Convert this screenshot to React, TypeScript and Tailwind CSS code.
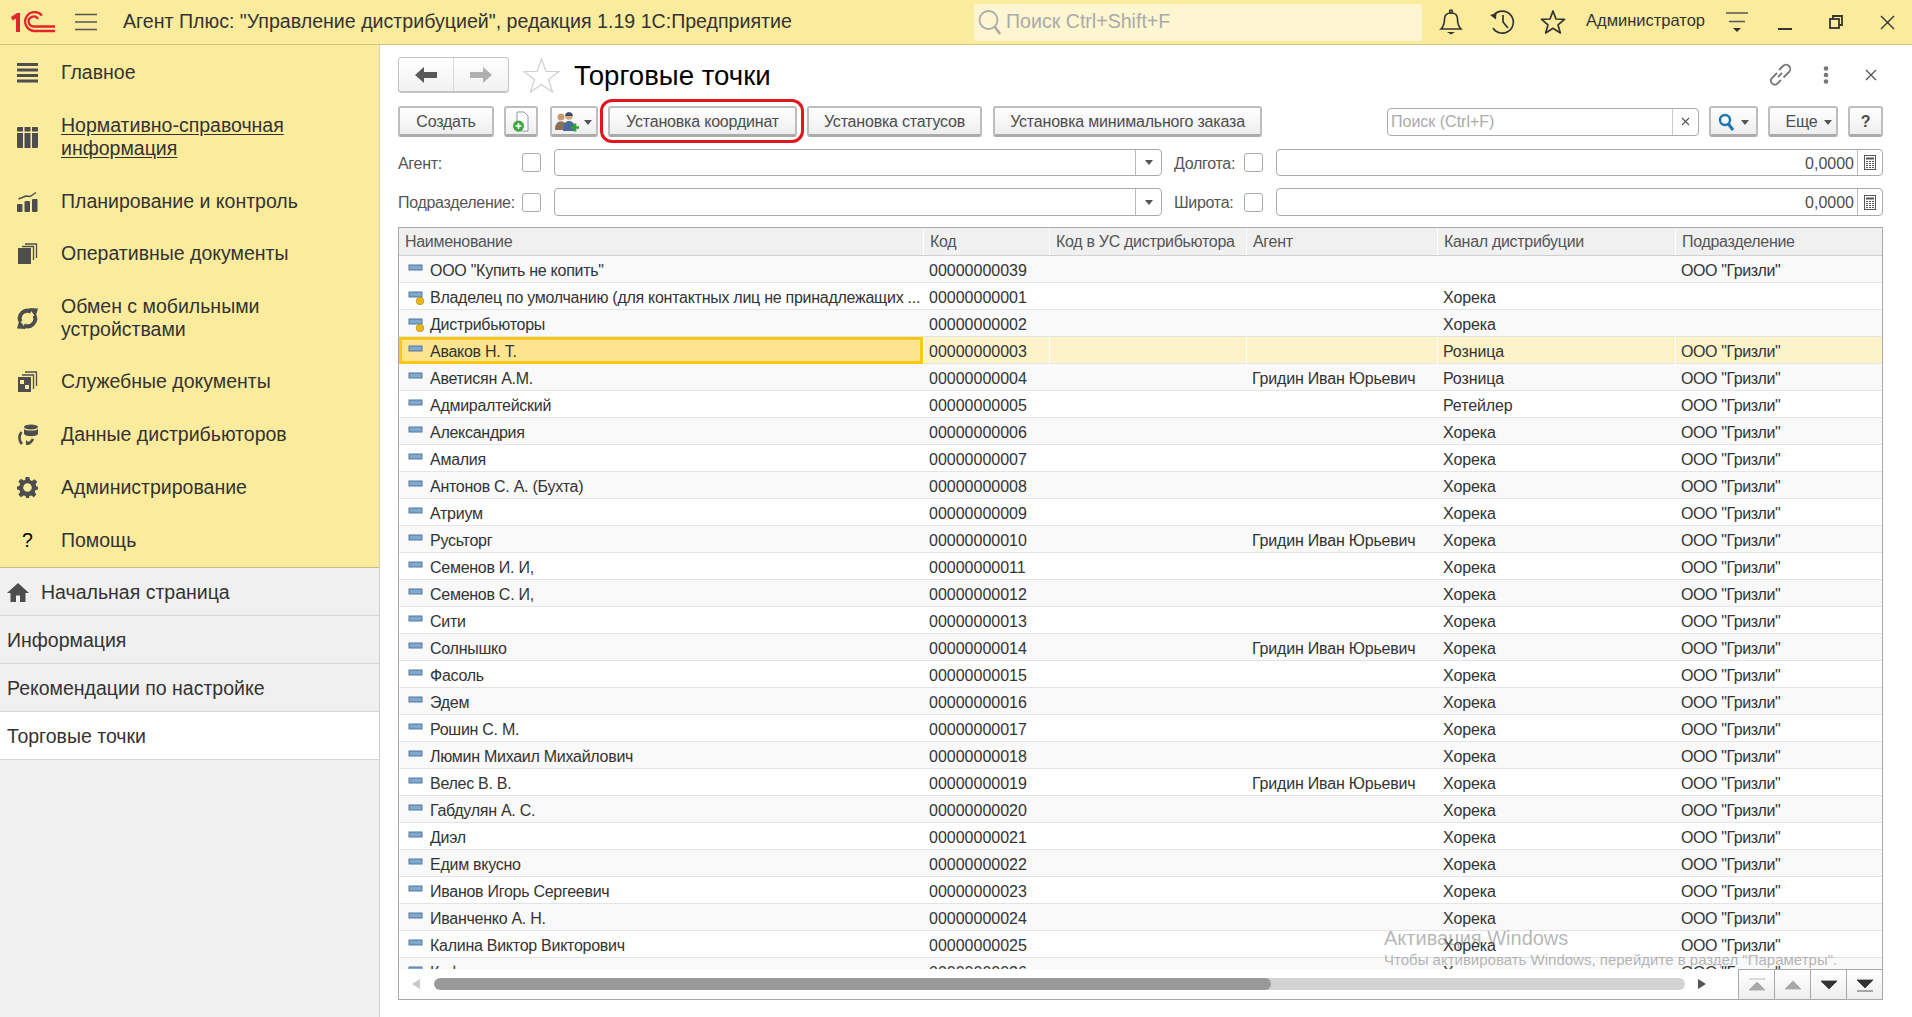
import React from "react";

const FONT = "font-['Liberation_Sans',Arial,sans-serif]";

type Row = [string, string, string, string, string, number?];
const G = 'ООО "Гризли"';
const A = "Гридин Иван Юрьевич";
const H = "Хорека";
const rows: Row[] = [
  ['ООО "Купить не копить"', "00000000039", "", "", G, 0],
  ["Владелец по умолчанию (для контактных лиц не принадлежащих ...", "00000000001", "", H, "", 1],
  ["Дистрибьюторы", "00000000002", "", H, "", 1],
  ["Аваков Н. Т.", "00000000003", "", "Розница", G],
  ["Аветисян А.М.", "00000000004", A, "Розница", G],
  ["Адмиралтейский", "00000000005", "", "Ретейлер", G],
  ["Александрия", "00000000006", "", H, G],
  ["Амалия", "00000000007", "", H, G],
  ["Антонов С. А. (Бухта)", "00000000008", "", H, G],
  ["Атриум", "00000000009", "", H, G],
  ["Русьторг", "00000000010", A, H, G],
  ["Семенов И. И,", "00000000011", "", H, G],
  ["Семенов С. И,", "00000000012", "", H, G],
  ["Сити", "00000000013", "", H, G],
  ["Солнышко", "00000000014", A, H, G],
  ["Фасоль", "00000000015", "", H, G],
  ["Эдем", "00000000016", "", H, G],
  ["Рошин С. М.", "00000000017", "", H, G],
  ["Люмин Михаил Михайлович", "00000000018", "", H, G],
  ["Велес В. В.", "00000000019", A, H, G],
  ["Габдулян А. С.", "00000000020", "", H, G],
  ["Диэл", "00000000021", "", H, G],
  ["Едим вкусно", "00000000022", "", H, G],
  ["Иванов Игорь Сергеевич", "00000000023", "", H, G],
  ["Иванченко А. Н.", "00000000024", "", H, G],
  ["Калина Виктор Викторович", "00000000025", "", H, G],
  ["Кафе", "00000000026", "", H, G],
];

const C = "#4d4d4d";

function NavIcon({ k }: { k: string }) {
  const common = { width: 21, height: 21, viewBox: "0 0 21 21", fill: C, className: "shrink-0" };
  switch (k) {
    case "main":
      return (
        <svg {...common}>
          <rect x="0" y="1" width="21" height="3" />
          <rect x="0" y="6.5" width="21" height="3" />
          <rect x="0" y="12" width="21" height="3" />
          <rect x="0" y="17.5" width="21" height="3" />
        </svg>
      );
    case "ref":
      return (
        <svg {...common}>
          <rect x="0" y="0" width="21" height="21" rx="1" />
          <rect x="0" y="4.5" width="21" height="1.5" fill="#fbec9d" />
          <rect x="6" y="0" width="1.5" height="21" fill="#fbec9d" />
          <rect x="13.5" y="0" width="1.5" height="21" fill="#fbec9d" />
        </svg>
      );
    case "plan":
      return (
        <svg {...common}>
          <rect x="0" y="13" width="5.5" height="8" rx="1" />
          <rect x="7.5" y="10" width="5.5" height="11" rx="1" />
          <rect x="15" y="8" width="5.5" height="13" rx="1" />
          <path d="M1.5 8 L9 5 L13 5.5 L19 1.5" fill="none" stroke={C} strokeWidth="1.5" />
        </svg>
      );
    case "oper":
      return (
        <svg {...common}>
          <rect x="1" y="5" width="13" height="16" />
          <path d="M5 3.5 H16.5 V17" fill="none" stroke={C} strokeWidth="1.3" />
          <path d="M8 1 H19.5 V15" fill="none" stroke={C} strokeWidth="1.3" />
        </svg>
      );
    case "sync":
      return (
        <svg {...common}>
          <path d="M3.5 13.5 A7.5 7.5 0 0 1 14 3.8" fill="none" stroke={C} strokeWidth="4" />
          <path d="M17.5 7.5 A7.5 7.5 0 0 1 7 17.2" fill="none" stroke={C} strokeWidth="4" />
          <path d="M12 0 L21 0.5 L18.5 9 Z" />
          <path d="M9 21 L0 20.5 L2.5 12 Z" />
        </svg>
      );
    case "serv":
      return (
        <svg {...common}>
          <rect x="1" y="6" width="13" height="15" />
          <rect x="3" y="9" width="4" height="4" fill="#fbec9d" />
          <rect x="8" y="14" width="4" height="4" fill="#fbec9d" />
          <path d="M5 4 H16.5 V18" fill="none" stroke={C} strokeWidth="1.3" />
          <path d="M8 1 H19.5 V15" fill="none" stroke={C} strokeWidth="1.3" />
        </svg>
      );
    case "dist":
      return (
        <svg {...common}>
          <ellipse cx="14" cy="3" rx="7" ry="2.6" />
          <path d="M7 5 C9 7 19 7 21 5 V10 C19 13 9 13 7 10 Z" />
          <path d="M4.5 8 A9 9 0 0 0 5 20" fill="none" stroke={C} strokeWidth="2.6" />
          <path d="M10 20 A9 9 0 0 0 16 15" fill="none" stroke={C} strokeWidth="2.6" />
          <path d="M9 16 L14 20 L9 21 Z" />
        </svg>
      );
    case "admin":
      return (
        <svg {...common}>
          <path
            fillRule="evenodd"
            d="M8.6 0 H12.4 L13 3 L15 3.9 L17.6 2.2 L20.2 4.8 L18.5 7.4 L19.4 9.4 L21 9.6 V12.4 L18.6 13 L17.7 15 L19.4 17.6 L16.8 20.2 L14.2 18.5 L12.4 19 L12 21 H9 L8.6 19 L6.6 18.5 L4 20.2 L1.4 17.6 L3.1 15 L2.3 13 L0 12.4 V9.6 L2.3 9 L3.1 7 L1.4 4.4 L4 1.8 L6.6 3.5 L8.2 3 Z M10.5 6.2 A4.3 4.3 0 1 0 10.5 14.8 A4.3 4.3 0 1 0 10.5 6.2 Z"
          />
        </svg>
      );
    default:
      return <span className="w-[21px] shrink-0 text-center text-black">?</span>;
  }
}

const nav: [string, string, string, boolean?][] = [
  ["main", "Главное", "py-[15px]"],
  ["ref", "Нормативно-справочная информация", "py-[15px]", true],
  ["plan", "Планирование и контроль", "pt-[15px] pb-[14px]"],
  ["oper", "Оперативные документы", "py-[15px]"],
  ["sync", "Обмен с мобильными устройствами", "pt-[15px] pb-[14px]"],
  ["serv", "Служебные документы", "py-[15px]"],
  ["dist", "Данные дистрибьюторов", "py-[15px]"],
  ["admin", "Администрирование", "py-[15px]"],
  ["help", "Помощь", "py-[15px]"],
];

function TopBar() {
  return (
    <header className="flex h-[45px] shrink-0 items-center border-b border-[#d3c47c] bg-[#fbec9d] text-[#333]">
      <svg width="44" height="22" viewBox="0 0 44 22" className="ml-[11px] shrink-0" fill="none" stroke="#e0262c" strokeWidth="2.3">
        <path d="M0 6 L6 2 H9 V21 H5 V7.5 L1.5 9.5" fill="#e0262c" stroke="none" />
        <path d="M44 20 H23 A9.5 9.5 0 1 1 31 4.5" />
        <path d="M44 15.5 H23 A5 5 0 1 1 27 8" />
      </svg>
      <svg width="22" height="18" viewBox="0 0 22 18" className="ml-[20px] shrink-0" stroke="#555" strokeWidth="1.6">
        <path d="M0 1.5 H22 M0 9 H22 M0 16.5 H22" />
      </svg>
      <div className="ml-[26px] w-[809px] shrink-0 whitespace-nowrap text-[19.6px]">Агент Плюс: "Управление дистрибуцией", редакция 1.19 1С:Предприятие</div>
      <div className="ml-[42px] flex h-[37px] w-[448px] shrink-0 items-center rounded-[2px] bg-[#fdf6d0] pl-[3px] text-[19.6px] text-[#aaa]">
        <svg width="26" height="28" viewBox="0 0 26 28" fill="none" stroke="#aaa" strokeWidth="1.8">
          <circle cx="11.5" cy="12" r="9" />
          <path d="M18 19 L23 26" strokeWidth="2.6" />
        </svg>
        <span className="ml-[3px]">Поиск Ctrl+Shift+F</span>
      </div>
      <svg width="24" height="26" viewBox="0 0 24 26" className="ml-[17px] shrink-0" fill="none" stroke="#333" strokeWidth="1.6">
        <path d="M2 20 C5 17 5.5 14 5.5 10 C5.5 6 8 4 12 4 C16 4 18.5 6 18.5 10 C18.5 14 19 17 22 20 Z" />
        <circle cx="12" cy="2.5" r="1.4" />
        <path d="M8 23 H16 L12 25.5 Z" fill="#333" stroke="none" />
      </svg>
      <svg width="26" height="26" viewBox="0 0 26 26" className="ml-[26px] shrink-0" fill="none" stroke="#333" strokeWidth="1.7">
        <path d="M5 6 A11 11 0 1 1 4 19" />
        <path d="M1 6 L7.5 4 L7 10.5 Z" fill="#333" stroke="none" />
        <path d="M14 6 V13 L19 19" />
      </svg>
      <svg width="26" height="26" viewBox="0 0 26 26" className="ml-[25px] shrink-0" fill="none" stroke="#333" strokeWidth="1.7" strokeLinejoin="round">
        <path d="M13 2 L16 10 L24.5 10.3 L18 15.8 L20.3 24 L13 19.3 L5.7 24 L8 15.8 L1.5 10.3 L10 10 Z" />
      </svg>
      <div className="ml-[20px] w-[120px] shrink-0 whitespace-nowrap pb-[3px] text-[16.5px]">Администратор</div>
      <svg width="22" height="22" viewBox="0 0 22 22" className="ml-[20px] shrink-0" stroke="#555" strokeWidth="1.5">
        <path d="M0 2 H22 M3 10.5 H19" />
        <path d="M7 17 H15 L11 21 Z" fill="#333" stroke="none" />
      </svg>
      <div className="ml-[30px] mt-[13px] h-[2px] w-[14px] shrink-0 bg-[#333]" />
      <svg width="14" height="14" viewBox="0 0 14 14" className="ml-[37px] shrink-0" fill="none" stroke="#333" strokeWidth="1.8">
        <rect x="1" y="4" width="9" height="9" />
        <path d="M4 4 V1 H13 V10 H10" />
      </svg>
      <svg width="15" height="15" viewBox="0 0 15 15" className="ml-[37px] shrink-0" stroke="#333" strokeWidth="1.4">
        <path d="M1 1 L14 14 M14 1 L1 14" />
      </svg>
    </header>
  );
}

function Sidebar() {
  return (
    <aside className="flex w-[380px] shrink-0 flex-col border-r border-[#cfcfcf] bg-[#f0f0f0] text-[#333]">
      <nav className="border-b border-[#c9bd85] bg-[#fbec9d] pt-[1px] text-[19.5px] leading-[23px]">
        {nav.map(([k, label, pad, under]) => (
          <div key={k} className={`flex items-center pl-[17px] ${pad}`}>
            <NavIcon k={k} />
            <span className={`ml-[23px] w-[270px] ${under ? "underline underline-offset-2" : ""}`}>{label}</span>
          </div>
        ))}
      </nav>
      <div className="flex h-[48px] items-center border-b border-[#d6d6d6] pl-[7px] pt-[2px] text-[19.5px]">
        <svg width="22" height="20" viewBox="0 0 22 20" fill={C}>
          <path d="M11 0 L22 10 H18.5 V19 H13 V12.5 H9 V19 H3.5 V10 H0 Z" />
        </svg>
        <span className="ml-[12px]">Начальная страница</span>
      </div>
      <div className="flex h-[48px] items-center border-b border-[#d6d6d6] pl-[7px] pt-[2px] text-[19.5px]">Информация</div>
      <div className="flex h-[48px] items-center border-b border-[#d6d6d6] pl-[7px] pt-[2px] text-[19.5px]">Рекомендации по настройке</div>
      <div className="flex h-[48px] items-center border-b border-[#d6d6d6] bg-white pl-[7px] pt-[2px] text-[19.5px]">Торговые точки</div>
    </aside>
  );
}

function Btn({ className = "", children }: { className?: string; children: React.ReactNode }) {
  return (
    <div className={`flex h-[31px] shrink-0 items-center justify-center whitespace-nowrap rounded-[3px] border-[2px] border-b-[3px] border-[#bdbdbd] border-b-[#ababab] bg-linear-to-b from-white to-[#eeeeee] pt-[2px] text-[16px] tracking-[-0.2px] text-[#4d4d4d] ${className}`}>
      {children}
    </div>
  );
}

const Caret = () => (
  <svg width="8" height="5" viewBox="0 0 8 5" className="shrink-0" fill="#555">
    <path d="M0 0 H8 L4 5 Z" />
  </svg>
);

function Check() {
  return <div className="h-[19px] w-[19px] shrink-0 rounded-[3px] border border-[#aaa] bg-white" />;
}

function Calc() {
  return (
    <svg width="12" height="15" viewBox="0 0 12 15" fill="none" stroke="#555">
      <rect x="0.5" y="0.5" width="11" height="14" />
      <rect x="2" y="2.5" width="8" height="2" fill="#555" stroke="none" />
      <path d="M2 6.5 H10 M2 8.5 H10 M2 10.5 H10 M2 12.5 H10" strokeDasharray="2 1" />
    </svg>
  );
}

function SelectField() {
  return (
    <div className="ml-[13px] flex h-full w-[608px] shrink-0 items-stretch rounded-[4px] border border-[#aaa]">
      <div className="flex-1" />
      <div className="flex w-[26px] items-center justify-center border-l border-[#bbb]">
        <Caret />
      </div>
    </div>
  );
}

function NumField() {
  return (
    <div className="ml-[13px] flex h-full flex-1 items-stretch rounded-[4px] border border-[#aaa] text-[16px] tracking-normal text-[#4d4d4d]">
      <div className="flex flex-1 items-center justify-end pr-[3px] pt-[2px]">0,0000</div>
      <div className="flex w-[25px] items-center justify-center border-l border-[#bbb]">
        <Calc />
      </div>
    </div>
  );
}

function RowIcon({ yellow }: { yellow?: boolean }) {
  return (
    <svg width="17" height="16" viewBox="0 0 17 16" className="shrink-0">
      <rect x="2" y="3" width="13" height="5" fill="#7fa9cf" stroke="#58779a" />
      {yellow && <circle cx="13" cy="12" r="3.8" fill="#e8b61c" stroke="#b98f14" strokeWidth="0.7" />}
    </svg>
  );
}

const cols = "grid grid-cols-[524px_126px_197px_191px_238px_1fr]";

function Table() {
  const heads = ["Наименование", "Код", "Код в УС дистрибьютора", "Агент", "Канал дистрибуции", "Подразделение"];
  return (
    <div className="relative mt-[11px] flex h-[773px] flex-col border-[1.5px] border-[#a8a8a8] text-[16px] text-[#333]">
      <div className={`${cols} h-[28px] shrink-0 border-b border-[#d0d0d0] bg-[#f0f0f0] text-[#555] tracking-[-0.3px]`}>
        {heads.map((h, i) => (
          <div key={h} className={`flex items-center overflow-hidden whitespace-nowrap pt-[1px] ${i === 0 ? "pl-[6px]" : "border-l border-white pl-[6px]"}`}>
            {h}
          </div>
        ))}
      </div>
      <div className="flex-1 overflow-hidden">
        {rows.map((r, i) => {
          const sel = i === 3;
          const cell = sel ? "border-l border-white pl-[5px]" : "pl-[6px]";
          return (
            <div
              key={r[1]}
              className={`${cols} h-[27px] border-b border-[#e4e4e4] ${sel ? "bg-[#fdf3c9]" : i % 2 === 0 ? "bg-[#f9f9f9]" : "bg-white"}`}
            >
              <div className={`flex items-center overflow-hidden whitespace-nowrap ${sel ? "border-[3px] border-[#fcc814] bg-[#fde48e] pl-[5px]" : "pl-[8px]"}`}>
                <RowIcon yellow={r[5] === 1} />
                <span className="ml-[6px] pt-[3px] tracking-[-0.27px]">{r[0]}</span>
              </div>
              <div className={`flex items-center pt-[3px] ${cell}`}>{r[1]}</div>
              <div className={sel ? "border-l border-white" : ""} />
              <div className={`flex items-center overflow-hidden whitespace-nowrap pt-[3px] tracking-[-0.2px] ${cell}`}>{r[2]}</div>
              <div className={`flex items-center pt-[3px] tracking-[-0.1px] ${cell}`}>{r[3]}</div>
              <div className={`flex items-center pt-[3px] tracking-[-0.4px] ${cell}`}>{r[4]}</div>
            </div>
          );
        })}
      </div>
      <div className="flex h-[30px] shrink-0 items-stretch bg-white">
        <div className="flex flex-1 items-center">
          <svg width="8" height="10" viewBox="0 0 8 10" className="ml-[13px] shrink-0" fill="#c8c8c8">
            <path d="M8 0 V10 L0 5 Z" />
          </svg>
          <div className="ml-[14px] flex h-[12px] w-[1251px] shrink-0 overflow-hidden rounded-full bg-[#d3d3d3]">
            <div className="h-full w-[837px] rounded-full bg-[#999]" />
          </div>
          <svg width="8" height="10" viewBox="0 0 8 10" className="ml-[13px] shrink-0" fill="#555">
            <path d="M0 0 V10 L8 5 Z" />
          </svg>
        </div>
        {[
          ["M2 2 H18 M10 5 L18 13 H2 Z", "#a8a8a8"],
          ["M10 4 L18 12 H2 Z", "#a8a8a8"],
          ["M2 4 H18 L10 12 Z", "#333"],
          ["M2 3 H18 L10 11 Z M2 14 H18", "#333"],
        ].map(([d, c], i) => (
          <div key={i} className="flex w-[36px] items-center justify-center border-l border-t border-[#a8a8a8] bg-linear-to-b from-white to-[#eeeeee]">
            <svg width="20" height="16" viewBox="0 0 20 16" fill={c} stroke={c} strokeWidth="0.8">
              <path d={d} />
            </svg>
          </div>
        ))}
      </div>
    </div>
  );
}

function Content() {
  return (
    <main className="flex min-w-0 flex-1 flex-col pl-[18px] pr-[29px] pt-[12px] text-[#333]">
      <div className="flex h-[36px] shrink-0 items-center">
        <div className="flex h-full w-[111px] items-stretch rounded-[4px] border border-[#c4c4c4] border-b-2 bg-linear-to-b from-white to-[#f1f1f1]">
          <div className="flex flex-1 items-center justify-center border-r border-[#d8d8d8]">
            <svg width="22" height="16" viewBox="0 0 22 16" fill="#595959"><path d="M0 8 L9 0 V5 H22 V11 H9 V16 Z" /></svg>
          </div>
          <div className="flex flex-1 items-center justify-center">
            <svg width="22" height="16" viewBox="0 0 22 16" fill="#b0b0b0"><path d="M22 8 L13 0 V5 H0 V11 H13 V16 Z" /></svg>
          </div>
        </div>
        <svg width="37" height="35" viewBox="0 0 37 35" className="ml-[14px] shrink-0" fill="none" stroke="#cfcfcf" strokeWidth="1.2">
          <path d="M18.5 1 L23 13.5 L36 13.5 L25.5 21.5 L29.5 34 L18.5 26.5 L7.5 34 L11.5 21.5 L1 13.5 L14 13.5 Z" />
        </svg>
        <h1 className="ml-[14px] whitespace-nowrap pt-[1px] text-[27.6px] font-normal text-black">Торговые точки</h1>
        <div className="flex-1" />
        <svg width="24" height="24" viewBox="0 0 24 24" fill="none" stroke="#777" strokeWidth="1.8">
          <path d="M10 14 L14 10" />
          <path d="M9 10 L3.5 15.5 A4 4 0 0 0 9 21 L13 17" />
          <path d="M11 7 L15 3 A4 4 0 0 1 21 9 L15.5 14.5" />
        </svg>
        <svg width="6" height="18" viewBox="0 0 6 18" className="ml-[31px]" fill="#777">
          <circle cx="3" cy="2.5" r="2.3" />
          <circle cx="3" cy="9" r="2.3" />
          <circle cx="3" cy="15.5" r="2.3" />
        </svg>
        <svg width="12" height="12" viewBox="0 0 12 12" className="ml-[36px] mr-[6px]" stroke="#555" strokeWidth="1.3">
          <path d="M1 1 L11 11 M11 1 L1 11" />
        </svg>
      </div>

      <div className="mt-[13px] flex h-[31px] shrink-0 items-center">
        <Btn className="w-[96px]">Создать</Btn>
        <Btn className="ml-[10px] w-[34px]">
          <svg width="18" height="22" viewBox="0 0 18 22" fill="none">
            <path d="M5 1 H12 L16 5 V20 H5 Z" fill="#fff" stroke="#8c9bb0" />
            <circle cx="6.5" cy="15" r="5.5" fill="#3fa83f" />
            <path d="M6.5 12 V18 M3.5 15 H9.5" stroke="#fff" strokeWidth="1.6" />
          </svg>
        </Btn>
        <Btn className="ml-[12px] w-[48px] gap-[4px] pr-[3px]">
          <svg width="26" height="22" viewBox="0 0 26 22">
            <circle cx="7" cy="6" r="3.5" fill="#c99a6b" />
            <path d="M1 19 C1 12 4 10.5 7 10.5 C10 10.5 13 12 13 19 Z" fill="#8a6d5a" />
            <circle cx="15" cy="5" r="3.8" fill="#d9a877" />
            <path d="M11.2 5 A3.8 3.8 0 0 1 18.8 5 Z" fill="#3a4a6b" />
            <path d="M9 20 C9 12 12 10 15 10 C18 10 21 12 21 20 Z" fill="#4a6a9b" />
            <path d="M17 16.5 H25 M21 12.5 V20.5" stroke="#2ca62c" strokeWidth="2.6" />
          </svg>
          <Caret />
        </Btn>
        <div className="relative ml-[10px]">
          <Btn className="w-[189px]">Установка координат</Btn>
          <div className="pointer-events-none absolute -bottom-[6px] -left-[8px] -right-[7px] -top-[7px] rounded-[12px] border-[3px] border-[#e3161d]" />
        </div>
        <Btn className="ml-[10px] w-[175px]">Установка статусов</Btn>
        <Btn className="ml-[11px] w-[269px]">Установка минимального заказа</Btn>
        <div className="ml-[125px] flex h-[28px] w-[312px] shrink-0 items-stretch rounded-[4px] border border-[#aaa] text-[16px] text-[#aaa]">
          <div className="flex flex-1 items-center pl-[3px] pt-[1px]">Поиск (Ctrl+F)</div>
          <div className="flex w-[26px] items-center justify-center border-l border-[#ccc]">
            <svg width="9" height="9" viewBox="0 0 9 9" stroke="#555" strokeWidth="1.1"><path d="M1 1 L8 8 M8 1 L1 8" /></svg>
          </div>
        </div>
        <Btn className="ml-[10px] w-[49px] gap-[7px]">
          <svg width="16" height="18" viewBox="0 0 16 18" fill="none" stroke="#1f74b4" strokeWidth="2.4">
            <circle cx="7" cy="7" r="5" />
            <path d="M10.5 11 L15 17" strokeWidth="3" />
          </svg>
          <Caret />
        </Btn>
        <Btn className="ml-[10px] w-[70px] gap-[7px] pl-[12px]">
          Еще <Caret />
        </Btn>
        <Btn className="ml-[10px] w-[35px] font-bold">?</Btn>
      </div>

      <div className="mt-[12px] flex h-[27px] shrink-0 items-center text-[16px] tracking-[-0.3px] text-[#555]">
        <span className="w-[124px] shrink-0 whitespace-nowrap pt-[2px]">Агент:</span>
        <Check />
        <SelectField />
        <span className="ml-[12px] w-[70px] shrink-0 pt-[2px]">Долгота:</span>
        <Check />
        <NumField />
      </div>
      <div className="mt-[12px] flex h-[28px] shrink-0 items-center text-[16px] tracking-[-0.3px] text-[#555]">
        <span className="w-[124px] shrink-0 whitespace-nowrap pt-[2px]">Подразделение:</span>
        <Check />
        <SelectField />
        <span className="ml-[12px] w-[70px] shrink-0 pt-[2px]">Широта:</span>
        <Check />
        <NumField />
      </div>

      <Table />
    </main>
  );
}

export default function App() {
  return (
    <div className={`relative flex h-[1017px] w-[1912px] flex-col overflow-hidden bg-white ${FONT}`}>
      <TopBar />
      <div className="flex min-h-0 flex-1">
        <Sidebar />
        <Content />
      </div>
      <div className="pointer-events-none absolute left-[1384px] top-[926px] whitespace-nowrap text-[rgba(120,120,120,0.55)]">
        <div className="text-[20px] leading-[24px]">Активация Windows</div>
        <div className="text-[15px] leading-[20px]">Чтобы активировать Windows, перейдите в раздел "Параметры".</div>
      </div>
    </div>
  );
}
